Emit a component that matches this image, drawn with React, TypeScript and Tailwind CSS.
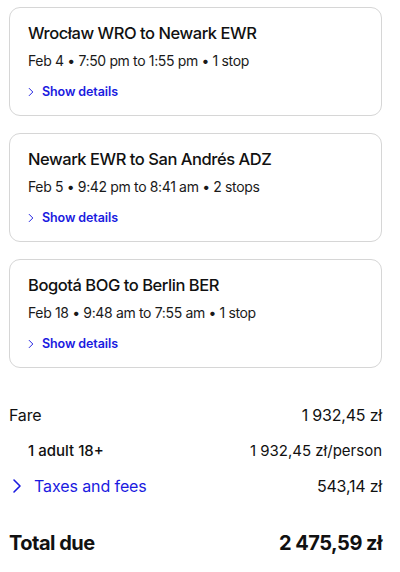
import React from 'react';

interface Flight {
  route: string;
  info: string;
}

const flights: Flight[] = [
  { route: 'Wrocław WRO to Newark EWR', info: 'Feb 4 • 7:50 pm to 1:55 pm • 1 stop' },
  { route: 'Newark EWR to San Andrés ADZ', info: 'Feb 5 • 9:42 pm to 8:41 am • 2 stops' },
  { route: 'Bogotá BOG to Berlin BER', info: 'Feb 18 • 9:48 am to 7:55 am • 1 stop' },
];

const Chevron: React.FC<{ className?: string }> = ({ className }) => (
  <svg viewBox="0 0 10 16" fill="none" className={className}>
    <path d="M2 2l6 6-6 6" stroke="currentColor" strokeWidth="1.6" strokeLinecap="round" strokeLinejoin="round" />
  </svg>
);

const FlightCard: React.FC<Flight> = ({ route, info }) => (
  <div className="h-[109px] rounded-[11px] border border-[#d6d6d6] bg-white pl-[18px] pr-3 pt-[13px]">
    <h3 className="text-[16.5px] leading-[24px] font-medium tracking-[-0.45px] text-[#111]">{route}</h3>
    <p className="mt-[6px] text-[14px] leading-[20px] tracking-[-0.35px] text-[#1a1a1a]">{info}</p>
    <button className="mt-[12px] flex items-center gap-[8px] text-[12.5px] leading-[18px] font-semibold tracking-[-0.1px] text-[#1a1ae0]">
      <Chevron className="w-[6px] h-[10px]" />
      Show details
    </button>
  </div>
);

export default function App() {
  return (
    <div className="w-[400px] h-[572px] bg-white font-['Inter','Noto_Sans',sans-serif] overflow-hidden">
      <div className="flex flex-col gap-[17px] pl-[9px] pr-[18px] pt-[7px]">
        {flights.map((f) => (
          <FlightCard key={f.route} {...f} />
        ))}
      </div>

      <div className="pl-[9px] pr-[18px] pt-[35px] text-[#111]">
        <div className="flex justify-between items-center h-[24px] text-[16px] tracking-[-0.2px]">
          <span>Fare</span>
          <span>1 932,45 zł</span>
        </div>
        <div className="flex justify-between items-center h-[24px] mt-[12px] text-[15px]">
          <span className="pl-[19px] font-medium">1 adult 18+</span>
          <span>1 932,45 zł/person</span>
        </div>
        <div className="flex justify-between items-center h-[24px] mt-[11px]">
          <button className="flex items-center gap-[12px] text-[16px] tracking-[-0.1px] text-[#1a1ae0]">
            <Chevron className="ml-[3px] w-[10px] h-[18px]" />
            Taxes and fees
          </button>
          <span className="text-[16px] tracking-[-0.2px]">543,14 zł</span>
        </div>
        <div className="flex justify-between items-center h-[30px] mt-[30px] text-[20px] font-bold tracking-[-0.5px]">
          <span>Total due</span>
          <span>2 475,59 zł</span>
        </div>
      </div>
    </div>
  );
}
